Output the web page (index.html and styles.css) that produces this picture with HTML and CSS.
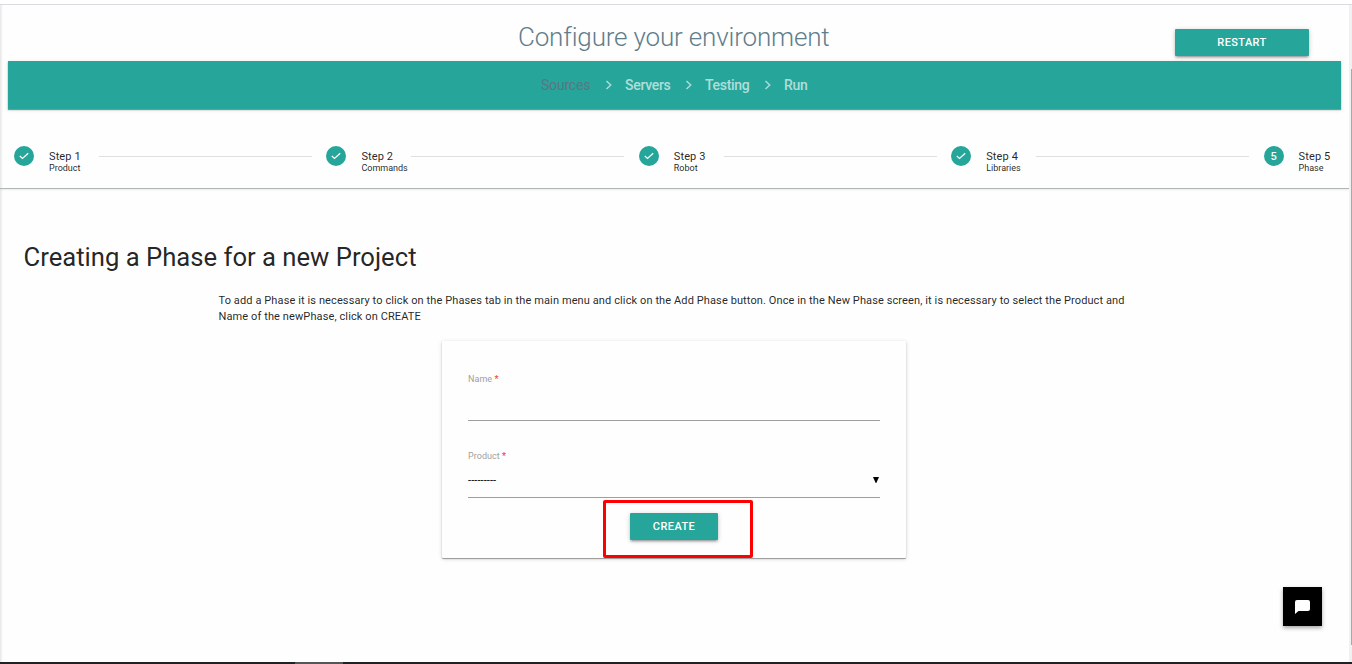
FILE: index.html
```html
<!DOCTYPE html>
<html lang="en">
<head>
<meta charset="utf-8">
<title>Configure your environment</title>
<link rel="stylesheet" href="styles.css">
</head>
<body>
<div class="page">
  <header class="header">
    <h1 class="title">Configure your environment</h1>
    <button class="btn btn-restart">RESTART</button>
  </header>
  <nav class="crumbs">
    <a class="crumb crumb-current">Sources</a>
    <svg class="chev" viewBox="0 0 8 10"><path d="M1.5 1 5.7 5 1.5 9"/></svg>
    <a class="crumb crumb-servers">Servers</a>
    <svg class="chev" viewBox="0 0 8 10"><path d="M1.5 1 5.7 5 1.5 9"/></svg>
    <a class="crumb crumb-testing">Testing</a>
    <svg class="chev" viewBox="0 0 8 10"><path d="M1.5 1 5.7 5 1.5 9"/></svg>
    <a class="crumb">Run</a>
  </nav>
  <section class="steps">
    <div class="step"><span class="dot"><svg class="check" viewBox="0 0 10 8"><path d="M.8 4 3.5 6.4 9.2 1.2"/></svg></span><div class="label"><span class="name">Step 1</span><span class="sub">Product</span></div><i class="line"></i></div>
    <div class="step"><span class="dot"><svg class="check" viewBox="0 0 10 8"><path d="M.8 4 3.5 6.4 9.2 1.2"/></svg></span><div class="label"><span class="name">Step 2</span><span class="sub">Commands</span></div><i class="line"></i></div>
    <div class="step"><span class="dot"><svg class="check" viewBox="0 0 10 8"><path d="M.8 4 3.5 6.4 9.2 1.2"/></svg></span><div class="label"><span class="name">Step 3</span><span class="sub">Robot</span></div><i class="line"></i></div>
    <div class="step"><span class="dot"><svg class="check" viewBox="0 0 10 8"><path d="M.8 4 3.5 6.4 9.2 1.2"/></svg></span><div class="label"><span class="name">Step 4</span><span class="sub">Libraries</span></div><i class="line"></i></div>
    <div class="step"><span class="dot">5</span><div class="label"><span class="name">Step 5</span><span class="sub">Phase</span></div></div>
  </section>
  <main class="main">
    <h2 class="heading">Creating a Phase for a new Project</h2>
    <p class="intro">To add a Phase it is necessary to click on the Phases tab in the main menu and click on the Add Phase button. Once in the New Phase screen, it is necessary to select the Product and<br>Name of the newPhase, click on CREATE</p>
    <form class="card">
      <div class="field"><label class="caption">Name <b class="req">*</b></label><div class="value"></div></div>
      <div class="field"><label class="caption">Product <b class="req">*</b></label><div class="value"><span class="dashes">---------</span><svg class="caret" viewBox="0 0 6 6"><path d="M0 0h6L3.3 6h-.6z"/></svg></div></div>
      <div class="actions"><button type="button" class="btn btn-create">CREATE</button></div>
      <div class="highlight"></div>
    </form>
  </main>
  <div class="chat"><svg class="bubble" viewBox="0 0 15 14"><path d="M2 0h11q2 0 2 2v7q0 2-2 2H3.5L0 14V2q0-2 2-2z"/></svg></div>
  <div class="scroll"><div class="thumb"></div></div>
  <div class="taskbar"><div class="task"></div></div>
</div>
</body>
</html>
```
FILE: styles.css
```css
*, *::before { box-sizing: border-box; }
body { margin: 0; overflow: hidden; font-family: Roboto, sans-serif; color: rgba(0, 0, 0, .87); background: #fefefe; }
.page { position: relative; height: 664px; padding-top: 4px; overflow: hidden; background: linear-gradient(90deg, #e6e6e6, #f6f6f6 2px, #fefefe 3px); }
.page::before { content: ""; position: absolute; top: 0; left: 0; right: 0; height: 5px; background: #fff; border-bottom: 1px solid #dadbdf; }
.header { height: 57px; padding: 0 43px 0 518px; display: flex; justify-content: space-between; align-items: flex-start; }
.title { margin: 16px 0 0; font-size: 26px; font-weight: 300; line-height: 34px; letter-spacing: -.17px; color: #607d8b; white-space: nowrap; }
.btn { border: 0; padding: 0; height: 27px; border-radius: 1px; background: #26a69a; color: #fff; font: 500 11px/26px Roboto, sans-serif; letter-spacing: .4px; box-shadow: 0 2px 2px rgba(0,0,0,.14), 0 3px 1px -2px rgba(0,0,0,.12), 0 1px 5px rgba(0,0,0,.2); }
.btn-restart { width: 134px; margin-top: 25px; }
.crumbs { position: relative; height: 48px; margin: 0 11px 0 8px; padding-left: 533px; display: flex; align-items: center; background: #26a69a; box-shadow: 0 1px 1px rgba(0,0,0,.4), 0 1px 4px rgba(0,0,0,.12); }
.crumb { font-size: 14px; font-weight: 500; letter-spacing: -.3px; color: rgba(255,255,255,.65); white-space: nowrap; }
.crumb-current { width: 64px; font-weight: 400; letter-spacing: -.2px; color: #5b7583; }
.crumb-servers { width: 60px; }
.crumb-testing { width: 59px; }
.chev { width: 8px; height: 10px; margin-right: 12px; flex: none; fill: none; stroke: rgba(255,255,255,.6); stroke-width: 1.5; }
.steps { height: 80px; margin-right: 3px; padding: 37px 0 0 14px; display: grid; grid-template-columns: repeat(4, 312.4px) 1fr; border-bottom: 1px solid #b0b4b2; box-shadow: 0 1px 2px rgba(0,0,0,.08); }
.step { display: flex; align-items: flex-start; }
.dot { width: 20px; height: 20px; margin-right: 15px; border-radius: 50%; display: flex; align-items: center; justify-content: center; background: #26a69a; color: #fff; font-size: 11px; font-weight: 500; }
.check { width: 10px; height: 8px; fill: none; stroke: #fff; stroke-width: 1.3; }
.label { width: 50px; display: flex; flex-direction: column; white-space: nowrap; }
.name { margin-top: 4px; font-size: 11px; line-height: 13px; letter-spacing: .12px; }
.sub { font-size: 9px; line-height: 11px; }
.line { width: 213px; height: 1px; margin-top: 10px; background: #e0e0e0; }
.main { padding-top: 52px; }
.heading { margin: 0 0 0 23.5px; font-size: 25.65px; line-height: 32px; font-weight: 400; }
.intro { margin: 20px 0 0 218.5px; font-size: 11px; line-height: 16px; letter-spacing: .107px; white-space: nowrap; }
.card { position: relative; width: 464px; height: 217px; margin: 16px 0 0 442px; padding: 28px 26px 0; border-radius: 1px; background: #fefefe; box-shadow: 0 1px 1px rgba(0,0,0,.35), 0 1px 4px rgba(0,0,0,.16); }
.field { height: 77px; padding-top: 4px; }
.caption { display: block; font-size: 9px; line-height: 12px; letter-spacing: .05px; color: #9e9e9e; }
.req { color: #f44336; font-weight: 500; }
.value { height: 36px; display: flex; justify-content: space-between; align-items: center; border-bottom: 1px solid #9e9e9e; }
.dashes { padding-top: 2px; font-size: 11px; letter-spacing: .1px; color: #000; }
.caret { width: 6px; height: 6px; margin-right: 1px; fill: #000; }
.actions { display: flex; justify-content: center; padding-top: 0; }
.btn-create { width: 88px; height: 27px; margin-top: -10px; }
.highlight { position: absolute; left: 161px; top: 159px; width: 150px; height: 58px; border: 3px solid #f00; border-radius: 2px; }
.chat { position: absolute; left: 1283px; top: 587px; width: 39px; height: 39px; display: flex; align-items: center; justify-content: center; background: #000; box-shadow: 0 2px 4px rgba(0,0,0,.35); }
.bubble { width: 15px; height: 14px; fill: #fff; }
.scroll { position: absolute; right: 0; top: 5px; bottom: 2px; width: 3px; padding: 64px 0 0 2px; background: #f1f1f1; }
.thumb { height: 576px; background: #a8a8a8; }
.taskbar { position: absolute; left: 0; right: 0; bottom: 0; height: 2px; padding-left: 295px; background: #202124; }
.task { width: 48px; height: 2px; background: #555; }
```
